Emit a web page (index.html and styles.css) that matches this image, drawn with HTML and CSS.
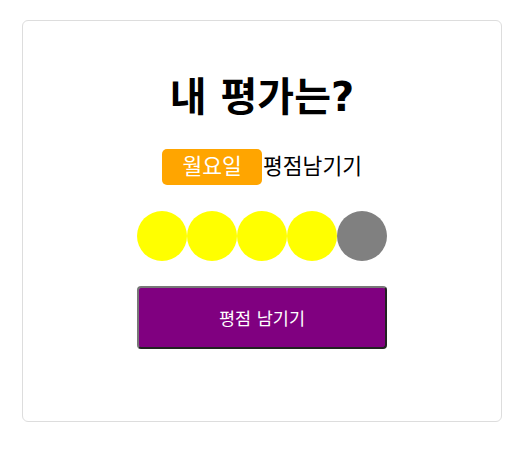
FILE: index.html
```html
<!DOCTYPE html>
<html lang="ko">
<head>
<meta charset="utf-8">
<link rel="stylesheet" href="styles.css">
</head>
<body>
<div class="card">
  <h1 class="title">내 평가는?</h1>
  <div class="day-row"><span class="day">월요일</span><span class="label">평점남기기</span></div>
  <div class="dots">
    <span class="dot on"></span><span class="dot on"></span><span class="dot on"></span><span class="dot on"></span><span class="dot off"></span>
  </div>
  <button class="submit">평점 남기기</button>
</div>
</body>
</html>
```
FILE: styles.css
```css
html, body {
  margin: 0;
  padding: 0;
  background: #fff;
}
body {
  padding: 20px 22px;
  font-family: "DejaVu Sans", "Noto Sans CJK KR", sans-serif;
  color: #000;
}
.card {
  box-sizing: border-box;
  width: 480px;
  height: 402px;
  border: 1px solid #dddddd;
  border-radius: 6px;
  padding-top: 51px;
  display: flex;
  flex-direction: column;
  align-items: center;
}
.title {
  margin: 0;
  font-size: 40px;
  line-height: 50px;
  height: 50px;
  font-weight: bold;
}
.day-row {
  margin-top: 27px;
  display: flex;
  align-items: center;
  height: 36px;
}
.day {
  width: 100px;
  height: 36px;
  line-height: 36px;
  background: #ffa500;
  color: #fff;
  border-radius: 5px;
  font-size: 21.5px;
  text-align: center;
}
.label {
  margin-left: 1px;
  font-size: 21.5px;
  line-height: 36px;
}
.dots {
  margin-top: 26px;
  display: flex;
}
.dot {
  width: 50px;
  height: 50px;
  border-radius: 50%;
}
.dot.on { background: #ffff00; }
.dot.off { background: #808080; }
.submit {
  margin-top: 25px;
  box-sizing: border-box;
  width: 250px;
  height: 63px;
  background: #800080;
  color: #fff;
  font-family: "DejaVu Sans", "Noto Sans CJK KR", sans-serif;
  font-size: 17.5px;
  border: 2px solid;
  border-color: #777 #222 #222 #777;
  border-radius: 4px;
  padding: 0;
}
```
